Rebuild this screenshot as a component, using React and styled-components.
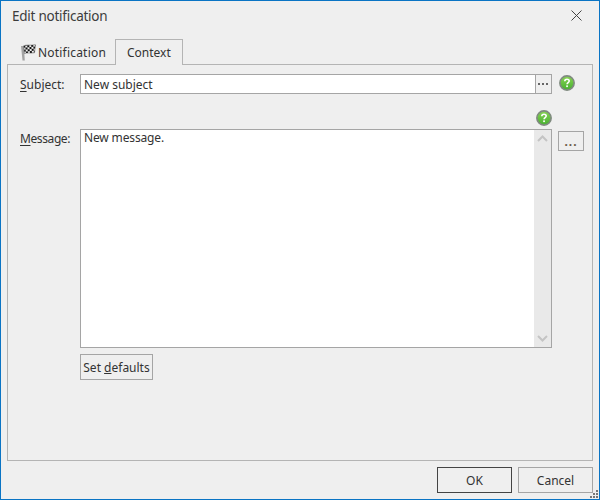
import React from 'react';
import styled, { createGlobalStyle } from 'styled-components';

const GlobalStyle = createGlobalStyle`
    html, body {
        margin: 0;
        padding: 0;
        background: #efefef;
    }
`;

const Window = styled.div`
    position: relative;
    box-sizing: border-box;
    width: 600px;
    height: 500px;
    display: flex;
    flex-direction: column;
    background: #efefef;
    border: 1px solid #0a74c4;
    font-family: 'Noto Sans', 'Open Sans', sans-serif;
    font-size: 12px;
    color: #333;
`;

const TitleBar = styled.div`
    height: 28px;
    display: flex;
    align-items: center;
    justify-content: space-between;
    padding: 0 17px 0 11px;
`;

const Title = styled.div`
    margin-top: 2px;
    font-size: 13.5px;
    letter-spacing: -0.25px;
    color: #3c3c3c;
`;

const TabStrip = styled.div`
    height: 25px;
    margin: 10px 0 0 6px;
    display: flex;
    align-items: flex-end;
`;

const Tab = styled.div`
    box-sizing: border-box;
    display: flex;
    align-items: center;
    gap: 2px;
    width: ${p => p.$width}px;
    height: ${p => (p.$active ? 26 : 24)}px;
    margin-bottom: ${p => (p.$active ? -1 : 0)}px;
    padding-left: ${p => p.$inset}px;
    background: #efefef;
    border: 1px solid ${p => (p.$active ? '#b4b4b4' : 'transparent')};
    border-bottom: none;
    position: relative;
    z-index: ${p => (p.$active ? 1 : 0)};
`;

const TabLabel = styled.span`
    letter-spacing: ${p => p.$spacing || 0}px;
`;

const Panel = styled.div`
    box-sizing: border-box;
    width: 586px;
    height: 397px;
    margin-left: 6px;
    padding: 9px 0 0 12px;
    border: 1px solid #b4b4b4;
`;

const Row = styled.div`
    display: flex;
    align-items: flex-start;
    margin-top: ${p => p.$top || 0}px;
`;

const Label = styled.div`
    width: 60px;
    height: 20px;
    flex: none;
    line-height: ${p => p.$line}px;
    letter-spacing: ${p => p.$spacing || 0}px;
    u {
        text-underline-offset: 2px;
    }
`;

const SubjectField = styled.div`
    box-sizing: border-box;
    width: 472px;
    height: 20px;
    display: flex;
    background: #fff;
    border: 1px solid #a5a5a5;
`;

const SubjectText = styled.div`
    flex: 1;
    padding-left: 3px;
    line-height: 20px;
`;

const DotsBox = styled.div`
    box-sizing: border-box;
    width: 16px;
    background: #efefef;
    border-left: 1px solid #a5a5a5;
    display: flex;
    align-items: center;
    justify-content: center;
`;

const HelpSlot = styled.div`
    margin-left: ${p => p.$left}px;
    margin-top: ${p => p.$top}px;
    height: 16px;
`;

const MessageBox = styled.div`
    box-sizing: border-box;
    width: 472px;
    height: 219px;
    display: flex;
    background: #fff;
    border: 1px solid #a5a5a5;
`;

const MessageText = styled.div`
    flex: 1;
    padding: 0 3px;
    line-height: 16px;
    letter-spacing: -0.15px;
`;

const ScrollBar = styled.div`
    width: 17px;
    background: #e9e9e9;
    display: flex;
    flex-direction: column;
    justify-content: space-between;
    align-items: center;
    padding: 5px 0;
`;

const BrowseButton = styled.div`
    box-sizing: border-box;
    width: 26px;
    height: 20px;
    margin: 2px 0 0 6px;
    border: 1px solid #a5a5a5;
    text-align: center;
    line-height: 19px;
    font-weight: 700;
    letter-spacing: 1px;
    color: #6a5a48;
`;

const DefaultsButton = styled.div`
    box-sizing: border-box;
    width: 73px;
    height: 26px;
    margin: 6px 0 0 60px;
    border: 1px solid #a5a5a5;
    text-align: center;
    line-height: 26px;
    white-space: nowrap;
`;

const Footer = styled.div`
    display: flex;
    justify-content: flex-end;
    gap: 6px;
    padding: 6px 6px 0 0;
`;

const DialogButton = styled.div`
    box-sizing: border-box;
    width: 75px;
    height: 26px;
    border: 1px solid ${p => (p.$primary ? '#444' : '#a5a5a5')};
    text-align: center;
    line-height: 25px;
`;

const Grip = styled.svg`
    position: absolute;
    right: 0;
    bottom: 0;
`;

const CloseIcon = () => (
    <svg width="11" height="11" viewBox="0 0 11 11">
        <path d="M.5.5l10 10M10.5.5l-10 10" stroke="#444" fill="none" />
    </svg>
);

const HelpIcon = () => (
    <svg width="16" height="16" viewBox="0 0 16 16" style={{ display: 'block' }}>
        <defs>
            <linearGradient id="helpFill" x1="0" y1="0" x2="0" y2="1">
                <stop offset="0" stopColor="#8ad455" />
                <stop offset="1" stopColor="#46b030" />
            </linearGradient>
        </defs>
        <circle cx="8" cy="8" r="7.1" fill="url(#helpFill)" stroke="#7f8a7f" strokeWidth="1.7" />
        <path d="M5.800 6.200c0-1.400 1-2 2.200-2s2.200.7 2.200 1.900c0 1.500-2.100 1.600-2.100 3.100" fill="none" stroke="#fff" strokeWidth="1.600" />
        <rect x="7.200" y="10.400" width="1.700" height="1.700" fill="#fff" />
    </svg>
);

const FlagIcon = () => (
    <svg width="15" height="17" viewBox="0 0 15 17">
        <defs>
            <pattern id="checker" width="4" height="4" patternUnits="userSpaceOnUse" patternTransform="rotate(-6)">
                <rect width="4" height="4" fill="#eee" />
                <rect width="2" height="2" fill="#111" />
                <rect x="2" y="2" width="2" height="2" fill="#111" />
            </pattern>
        </defs>
        <path d="M0 2l1.500 14.500h2.300L2.800 2z" fill="#a3a3a3" />
        <path d="M2.600 1.800c3-1.300 6-.3 11.900-1l-1 8c-3.800.7-7.400-.4-10 .7z" fill="url(#checker)" stroke="#555" strokeWidth=".5" />
    </svg>
);

const Dots = ({ color, gap = 2 }) => (
    <svg width="11" height="3" viewBox="0 0 11 3" style={{ display: 'block' }}>
        <rect x="0" y="0" width="2" height="2" fill={color} />
        <rect x={2 + gap} y="0" width="2" height="2" fill={color} />
        <rect x={4 + gap * 2} y="0" width="2" height="2" fill={color} />
    </svg>
);

const Chevron = ({ up }) => (
    <svg width="11" height="7" viewBox="0 0 11 7">
        <path d={up ? 'M1 6l4.500-4.500L10 6' : 'M1 1l4.500 4.500L10 1'} fill="none" stroke="#c4c4c4" strokeWidth="2" />
    </svg>
);

export default function App() {
    return (
        <Window>
            <GlobalStyle />
            <TitleBar>
                <Title>Edit notification</Title>
                <CloseIcon />
            </TitleBar>
            <TabStrip>
                <Tab $width={108} $inset={13}>
                    <FlagIcon />
                    <TabLabel $spacing={0.2}>Notification</TabLabel>
                </Tab>
                <Tab $width={68} $inset={11} $active>Context</Tab>
            </TabStrip>
            <Panel>
                <Row>
                    <Label $line={21}><u>S</u>ubject:</Label>
                    <SubjectField>
                        <SubjectText>New subject</SubjectText>
                        <DotsBox><Dots color="#666" /></DotsBox>
                    </SubjectField>
                    <HelpSlot $left={7} $top={1}><HelpIcon /></HelpSlot>
                </Row>
                <Row>
                    <HelpSlot $left={516} $top={16}><HelpIcon /></HelpSlot>
                </Row>
                <Row $top={3}>
                    <Label $line={20} $spacing={-0.4}><u>M</u>essage:</Label>
                    <MessageBox>
                        <MessageText>New message.</MessageText>
                        <ScrollBar>
                            <Chevron up />
                            <Chevron />
                        </ScrollBar>
                    </MessageBox>
                    <BrowseButton>...</BrowseButton>
                </Row>
                <DefaultsButton>Set <u>d</u>efaults</DefaultsButton>
            </Panel>
            <Footer>
                <DialogButton $primary>OK</DialogButton>
                <DialogButton>Cancel</DialogButton>
            </Footer>
            <Grip width="9" height="9" viewBox="0 0 9 9">
                <path d="M6 0h2v2H6zM3 3h2v2H3zM6 3h2v2H6zM0 6h2v2H0zM3 6h2v2H3zM6 6h2v2H6z" fill="#777" />
            </Grip>
        </Window>
    );
}
